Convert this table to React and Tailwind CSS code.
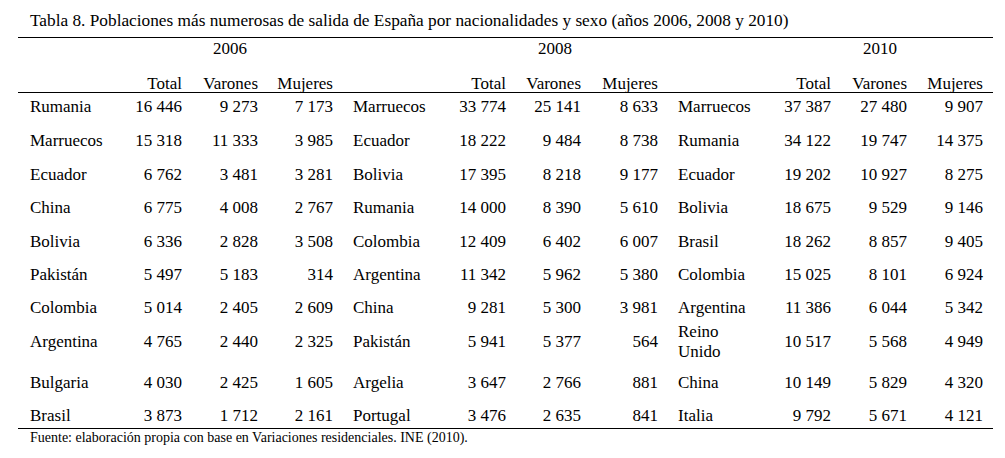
import React from "react";

const rows = [
  ["Rumania", "16 446", "9 273", "7 173", "Marruecos", "33 774", "25 141", "8 633", "Marruecos", "37 387", "27 480", "9 907"],
  ["Marruecos", "15 318", "11 333", "3 985", "Ecuador", "18 222", "9 484", "8 738", "Rumania", "34 122", "19 747", "14 375"],
  ["Ecuador", "6 762", "3 481", "3 281", "Bolivia", "17 395", "8 218", "9 177", "Ecuador", "19 202", "10 927", "8 275"],
  ["China", "6 775", "4 008", "2 767", "Rumania", "14 000", "8 390", "5 610", "Bolivia", "18 675", "9 529", "9 146"],
  ["Bolivia", "6 336", "2 828", "3 508", "Colombia", "12 409", "6 402", "6 007", "Brasil", "18 262", "8 857", "9 405"],
  ["Pakistán", "5 497", "5 183", "314", "Argentina", "11 342", "5 962", "5 380", "Colombia", "15 025", "8 101", "6 924"],
  ["Colombia", "5 014", "2 405", "2 609", "China", "9 281", "5 300", "3 981", "Argentina", "11 386", "6 044", "5 342"],
  ["Argentina", "4 765", "2 440", "2 325", "Pakistán", "5 941", "5 377", "564", "Reino|Unido", "10 517", "5 568", "4 949"],
  ["Bulgaria", "4 030", "2 425", "1 605", "Argelia", "3 647", "2 766", "881", "China", "10 149", "5 829", "4 320"],
  ["Brasil", "3 873", "1 712", "2 161", "Portugal", "3 476", "2 635", "841", "Italia", "9 792", "5 671", "4 121"],
];

const rowStyles = [
  "h-[34px] items-start pt-[4px]",
  "h-[34px] items-start pt-[4px]",
  "h-[33px] items-start pt-[4px]",
  "h-[34px] items-start pt-[4px]",
  "h-[33px] items-start pt-[4px]",
  "h-[33px] items-start pt-[4px]",
  "h-[27px] items-start pt-[4px]",
  "h-[42px] items-center",
  "h-[33px] items-start pt-[10px]",
  "h-[32px] items-start pt-[10px]",
];

const cellCls = [
  "pl-[12px] text-left",
  "pr-[10px] text-right",
  "pr-[10px] text-right",
  "pr-[7px] text-right",
  "pl-[13px] text-left",
  "pr-[11px] text-right",
  "pr-[12px] text-right",
  "pr-[11px] text-right",
  "pl-[9px] text-left",
  "pr-[11px] text-right",
  "pr-[11px] text-right",
  "pr-[10px] text-right",
];

const grid =
  "grid grid-cols-[95px_79px_76px_72px_95px_82px_76px_76px_94px_79px_76px_75px]";

const headers = ["", "Total", "Varones", "Mujeres", "", "Total", "Varones", "Mujeres", "", "Total", "Varones", "Mujeres"];

export default function App() {
  return (
    <div className="w-[1005px] h-[458px] overflow-hidden bg-white text-black font-['Liberation_Serif',serif] pl-[18px] pt-[11px]">
      <div className="w-[975px]">
        <div className="h-[26px] pl-[12px] text-[17.3px] leading-[20px] whitespace-nowrap">
          Tabla 8. Poblaciones más numerosas de salida de España por nacionalidades y sexo (años 2006, 2008 y 2010)
        </div>
        <div className="border-t border-b border-black h-[56px] flex flex-col justify-between text-[17px]">
          <div className={`${grid} leading-[20px] mt-[1px]`}>
            <div className="col-start-3 text-center">2006</div>
            <div className="col-start-7 text-center">2008</div>
            <div className="col-start-11 text-center">2010</div>
          </div>
          <div className={`${grid} leading-[16px]`}>
            {headers.map((h, i) => (
              <div key={i} className={`${cellCls[i]} whitespace-nowrap`}>
                {h}
              </div>
            ))}
          </div>
        </div>
        <div className="border-b border-black text-[17px] leading-[20px]">
          {rows.map((r, ri) => (
            <div key={ri} className={`${grid} ${rowStyles[ri]}`}>
              {r.map((c, ci) => (
                <div key={ci} className={`${cellCls[ci]} whitespace-nowrap`}>
                  {c.includes("|") ? (
                    <>
                      {c.split("|")[0]}
                      <br />
                      {c.split("|")[1]}
                    </>
                  ) : (
                    c
                  )}
                </div>
              ))}
            </div>
          ))}
        </div>
        <div className="pl-[12px] pt-[1px] text-[14px] leading-[16px] whitespace-nowrap">
          Fuente: elaboración propia con base en Variaciones residenciales. INE (2010).
        </div>
      </div>
    </div>
  );
}
